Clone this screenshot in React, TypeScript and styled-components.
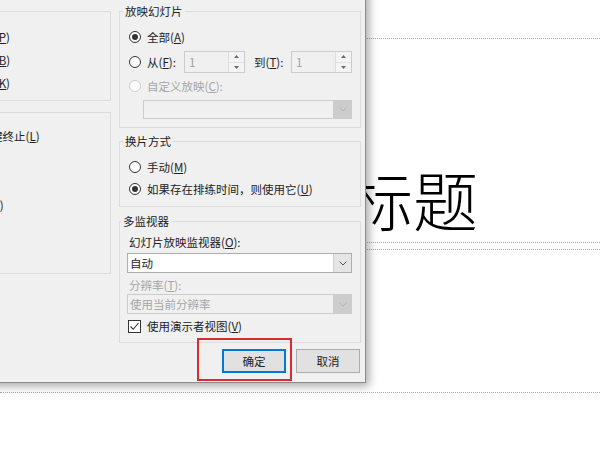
import styled, { createGlobalStyle } from 'styled-components';

const GlobalStyle = createGlobalStyle`
  html, body {
    margin: 0;
    padding: 0;
    background: #fff;
  }
  body {
    font-family: "Noto Sans CJK SC", "Liberation Sans", sans-serif;
  }
`;

const Page = styled.div`
  position: relative;
  width: 600px;
  height: 450px;
  overflow: hidden;
  background: #fff;
`;

// slide behind the dialog
const Slide = styled.div`
  display: flex;
  flex-direction: column;
  gap: 6px;
  padding-top: 38px;
`;

const Placeholder = styled.div<{ $height: number; $inset?: number }>`
  box-sizing: border-box;
  height: ${(p) => p.$height}px;
  padding-left: ${(p) => p.$inset ?? 0}px;
  border-top: 1px dotted #a8a8a8;
  border-bottom: 1px dotted #a8a8a8;
  display: flex;
  align-items: flex-end;
  justify-content: center;
`;

const SlideTitle = styled.div`
  font-family: "Noto Sans CJK SC", sans-serif;
  font-weight: 300;
  font-size: 65px;
  line-height: 65px;
  color: #000;
  padding-bottom: 11px;
`;

const Dialog = styled.div`
  position: absolute;
  left: -150px;
  top: -30px;
  width: 516px;
  box-sizing: border-box;
  padding: 33px 4px 9px 6px;
  background: #f0f0f0;
  border: 1px solid #8c8c8c;
  box-shadow: 3px 3px 9px rgba(0, 0, 0, 0.35);
  display: flex;
  flex-direction: column;
  font-family: "Noto Sans CJK SC", sans-serif;
  font-size: 11.5px;
  color: #222;
`;

const Columns = styled.div`
  display: grid;
  grid-template-columns: 254px 242px;
  column-gap: 8px;
  align-items: start;
`;

const Column = styled.div`
  display: flex;
  flex-direction: column;
`;

const Group = styled.fieldset<{ $mt?: number; $pad: string }>`
  margin: ${(p) => p.$mt ?? 0}px 0 0;
  padding: ${(p) => p.$pad};
  border: 1px solid #dcdcdc;
  min-width: 0;
  display: flex;
  flex-direction: column;
`;

const Legend = styled.legend`
  padding: 0 2px;
  margin-left: -6px;
  line-height: 14px;
  color: #222;
`;

const Row = styled.div<{ $mt?: number; $h?: number; $disabled?: boolean; $indent?: number }>`
  display: flex;
  align-items: center;
  gap: 6px;
  height: ${(p) => p.$h ?? 20}px;
  margin-top: ${(p) => p.$mt ?? 0}px;
  margin-left: ${(p) => p.$indent ?? 0}px;
  color: ${(p) => (p.$disabled ? '#a6a6a6' : '#222')};
  white-space: nowrap;
`;

const Radio = styled.span<{ $checked?: boolean; $disabled?: boolean }>`
  flex: none;
  box-sizing: border-box;
  width: 12px;
  height: 12px;
  border-radius: 50%;
  border: 1px solid ${(p) => (p.$disabled ? '#cccccc' : '#333')};
  background: #fff;
  display: flex;
  align-items: center;
  justify-content: center;

  &::after {
    content: '';
    display: ${(p) => (p.$checked ? 'block' : 'none')};
    width: 6px;
    height: 6px;
    border-radius: 50%;
    background: #333;
  }
`;

const Check = styled.span`
  flex: none;
  box-sizing: border-box;
  width: 13px;
  height: 13px;
  border: 1px solid #333;
  background: #fff;
  display: flex;
  align-items: center;
  justify-content: center;
`;

const FieldLabel = styled.span<{ $w: number; $ml?: number }>`
  flex: none;
  width: ${(p) => p.$w}px;
  margin-left: ${(p) => p.$ml ?? 0}px;
`;

const Spin = styled.div`
  flex: none;
  display: flex;
  box-sizing: border-box;
  width: 61px;
  height: 22px;
  border: 1px solid #cccccc;
  background: #f0f0f0;
`;

const SpinValue = styled.span`
  flex: 1;
  padding-left: 4px;
  line-height: 20px;
  color: #a0a0a0;
`;

const SpinButtons = styled.div`
  width: 15px;
  display: flex;
  flex-direction: column;
  border-left: 1px solid #dddddd;
`;

const SpinButton = styled.div`
  flex: 1;
  display: flex;
  align-items: center;
  justify-content: center;
  background: #f4f4f4;
  & + & {
    border-top: 1px solid #e2e2e2;
  }
`;

const Select = styled.div<{ $disabled?: boolean; $mt?: number; $indent?: number; $h?: number }>`
  display: flex;
  box-sizing: border-box;
  height: ${(p) => p.$h ?? 20}px;
  margin-top: ${(p) => p.$mt ?? 0}px;
  margin-left: ${(p) => p.$indent ?? 0}px;
  border: 1px solid ${(p) => (p.$disabled ? '#cccccc' : '#adadad')};
  background: ${(p) => (p.$disabled ? '#f0f0f0' : '#fff')};
  color: ${(p) => (p.$disabled ? '#a6a6a6' : '#222')};
`;

const SelectValue = styled.span`
  flex: 1;
  padding-left: 2px;
  display: flex;
  align-items: center;
`;

const SelectArrow = styled.div<{ $disabled?: boolean }>`
  width: 17px;
  display: flex;
  align-items: center;
  justify-content: center;
  background: ${(p) => (p.$disabled ? '#cccccc' : '#e5e5e5')};
  border-left: 1px solid ${(p) => (p.$disabled ? '#cccccc' : '#d0d0d0')};
`;

const ButtonRow = styled.div`
  display: flex;
  justify-content: flex-end;
  gap: 10px;
  margin-top: 6px;
  padding-right: 1px;
`;

const Button = styled.button<{ $primary?: boolean }>`
  box-sizing: border-box;
  width: 64px;
  height: 24px;
  padding: 0;
  font-family: "Noto Sans CJK SC", sans-serif;
  font-size: 11.5px;
  color: #222;
  background: #e1e1e1;
  border: ${(p) => (p.$primary ? '2px solid #0078d7' : '1px solid #adadad')};
`;

const Highlight = styled.div`
  position: absolute;
  left: 197px;
  top: 338px;
  width: 95px;
  height: 43px;
  box-sizing: border-box;
  border: 2px solid #dc2a2f;
`;

function Chevron({ color }: { color: string }) {
  return (
    <svg width="8" height="5" viewBox="0 0 8 5">
      <path d="M0.5 0.5 L4 4 L7.5 0.5" fill="none" stroke={color} strokeWidth="1" />
    </svg>
  );
}

function Triangle({ up }: { up?: boolean }) {
  return (
    <svg width="5" height="3" viewBox="0 0 5 3">
      <path d={up ? 'M0 3 L2.5 0 L5 3 Z' : 'M0 0 L2.5 3 L5 0 Z'} fill="#6a6a6a" />
    </svg>
  );
}

function SpinBox({ value }: { value: string }) {
  return (
    <Spin>
      <SpinValue>{value}</SpinValue>
      <SpinButtons>
        <SpinButton>
          <Triangle up />
        </SpinButton>
        <SpinButton>
          <Triangle />
        </SpinButton>
      </SpinButtons>
    </Spin>
  );
}

function CheckMark() {
  return (
    <svg width="11" height="11" viewBox="0 0 11 11">
      <path d="M1.5 5.5 L4.2 8.3 L9.5 2" fill="none" stroke="#333" strokeWidth="1.1" />
    </svg>
  );
}

function App() {
  return (
    <Page>
      <GlobalStyle />
      <Slide>
        <Placeholder $height={205} $inset={226}>
          <SlideTitle>标题</SlideTitle>
        </Placeholder>
        <Placeholder $height={144} />
      </Slide>

      <Dialog>
        <Columns>
          <Column>
            <Group $pad="9px 8px 7px 19px">
              <Legend>放映类型</Legend>
              <Row>
                <Radio $checked />
                <span>演讲者放映(全屏幕)(<u>P</u>)</span>
              </Row>
              <Row $mt={3}>
                <Radio />
                <span>观众自行浏览(窗口)(<u>B</u>)</span>
              </Row>
              <Row $mt={3}>
                <Radio />
                <span>在展台浏览(全屏幕)(<u>K</u>)</span>
              </Row>
            </Group>
            <Group $mt={4} $pad="7px 8px 6px 19px">
              <Legend>放映选项</Legend>
              <Row>
                <Check />
                <span>循环放映，按 ESC 键终止(<u>L</u>)</span>
              </Row>
              <Row $mt={3}>
                <Check />
                <span>放映时不加旁白(<u>N</u>)</span>
              </Row>
              <Row $mt={3}>
                <Check />
                <span>放映时不加动画(<u>S</u>)</span>
              </Row>
              <Row $mt={3}>
                <Check />
                <span>禁用硬件图形加速(<u>G</u>)</span>
              </Row>
              <Row $mt={6}>
                <span>绘图笔颜色(<u>E</u>):</span>
              </Row>
              <Row $mt={6}>
                <span>激光笔颜色(<u>R</u>):</span>
              </Row>
            </Group>
          </Column>

          <Column>
            <Group $pad="9px 8px 8px 9px">
              <Legend>放映幻灯片</Legend>
              <Row>
                <Radio $checked />
                <span>全部(<u>A</u>)</span>
              </Row>
              <Row $mt={4} $h={22} style={{ gap: 0 }}>
                <Radio />
                <FieldLabel $w={37} $ml={6}>
                  从(<u>F</u>):
                </FieldLabel>
                <SpinBox value="1" />
                <FieldLabel $w={37} $ml={9}>
                  到(<u>T</u>):
                </FieldLabel>
                <SpinBox value="1" />
              </Row>
              <Row $mt={3} $disabled>
                <Radio $disabled />
                <span>自定义放映(<u>C</u>):</span>
              </Row>
              <Select $disabled $mt={4} $indent={14} $h={19}>
                <SelectValue />
                <SelectArrow $disabled>
                  <Chevron color="#b4b4b4" />
                </SelectArrow>
              </Select>
            </Group>

            <Group $mt={6} $pad="9px 8px 7px 9px">
              <Legend>换片方式</Legend>
              <Row>
                <Radio />
                <span>手动(<u>M</u>)</span>
              </Row>
              <Row $mt={2}>
                <Radio $checked />
                <span>如果存在排练时间，则使用它(<u>U</u>)</span>
              </Row>
            </Group>

            <Group $mt={7} $pad="5px 8px 8px 7px">
              <Legend>多监视器</Legend>
              <Row $h={18} $indent={2}>
                <span>幻灯片放映监视器(<u>O</u>):</span>
              </Row>
              <Select $mt={2}>
                <SelectValue>自动</SelectValue>
                <SelectArrow>
                  <Chevron color="#555" />
                </SelectArrow>
              </Select>
              <Row $h={18} $mt={3} $indent={2} $disabled>
                <span>分辨率(<u>T</u>):</span>
              </Row>
              <Select $disabled>
                <SelectValue>使用当前分辨率</SelectValue>
                <SelectArrow $disabled>
                  <Chevron color="#b4b4b4" />
                </SelectArrow>
              </Select>
              <Row $h={16} $mt={4} $indent={1}>
                <Check>
                  <CheckMark />
                </Check>
                <span>使用演示者视图(<u>V</u>)</span>
              </Row>
            </Group>
          </Column>
        </Columns>

        <ButtonRow>
          <Button $primary>确定</Button>
          <Button>取消</Button>
        </ButtonRow>
      </Dialog>

      <Highlight />
    </Page>
  );
}

export default App;
